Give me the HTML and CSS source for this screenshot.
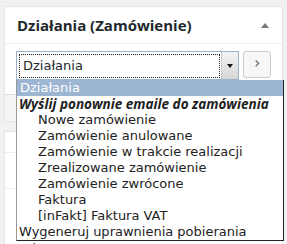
FILE: index.html
```html
<!DOCTYPE html>
<html lang="pl">
<head>
  <meta charset="UTF-8" />
  <title>Działania (Zamówienie)</title>
  <link rel="stylesheet" href="styles.css">
</head>
<body>

<div class="postbox">
  <div class="hndle">
    <h2>Działania (Zamówienie)</h2>
    <span class="toggle"></span>
  </div>
  <div class="inside">
    <div class="select">
      <div class="select-value">Działania</div>
      <div class="select-arrow"><span></span></div>
    </div>
    <button class="go">&#8250;</button>
  </div>
  <div class="publishing"></div>
</div>

<div class="postbox second">
  <div class="hndle small"></div>
  <div class="row"></div>
  <div class="row last">Faktura VAT: <a href="#">12/01/2017</a></div>
</div>

<ul class="dropdown">
  <li class="opt selected">Działania</li>
  <li class="group">Wyślij ponownie emaile do zamówienia</li>
  <li class="opt sub">Nowe zamówienie</li>
  <li class="opt sub">Zamówienie anulowane</li>
  <li class="opt sub">Zamówienie w trakcie realizacji</li>
  <li class="opt sub">Zrealizowane zamówienie</li>
  <li class="opt sub">Zamówienie zwrócone</li>
  <li class="opt sub">Faktura</li>
  <li class="opt sub">[inFakt] Faktura VAT</li>
  <li class="opt">Wygeneruj uprawnienia pobierania</li>
</ul>

</body>
</html>
```

FILE: styles.css
```css
body {
  margin: 0;
  background: #f1f1f1;
  font-family: "DejaVu Sans", sans-serif;
  color: #23282d;
  position: relative;
  height: 244px;
  overflow: hidden;
}
.postbox {
  margin: 6px 4px 0 4px;
  background: #fff;
  border: 1px solid #e5e5e5;
}
.hndle {
  height: 36px;
  border-bottom: 1px solid #eee;
  display: flex;
  align-items: center;
  justify-content: space-between;
  padding: 0 13px 0 12px;
}
.hndle h2 {
  margin: 0;
  font-family: "Open Sans", sans-serif;
  font-size: 15px;
  font-weight: bold;
  color: #23282d;
}
.toggle {
  width: 0;
  height: 0;
  border-left: 4px solid transparent;
  border-right: 4px solid transparent;
  border-bottom: 5px solid #72777c;
}
.inside {
  display: flex;
  align-items: flex-start;
  gap: 4px;
  padding: 7px 11px 14px 11px;
}
.select {
  width: 225px;
  height: 27px;
  border: 1px solid #9fb3c8;
  display: flex;
  background: #fff;
}
.select-value {
  flex: 1;
  margin: 2px 1px 1px 2px;
  border: 1px dotted #222;
  font-size: 13px;
  line-height: 21px;
  padding-left: 3px;
}
.select-arrow {
  width: 16px;
  background: linear-gradient(#f4f4f4, #d6d6d6);
  border-left: 1px solid #c8c8c8;
  display: flex;
  align-items: center;
  justify-content: center;
}
.select-arrow span {
  width: 0;
  height: 0;
  border-left: 3px solid transparent;
  border-right: 3px solid transparent;
  border-top: 4px solid #111;
}
.go {
  width: 28px;
  height: 27px;
  border: 1px solid #ccc;
  border-radius: 3px;
  background: #f7f7f7;
  color: #555;
  font-size: 15px;
  padding: 0 0 3px 0;
  font-family: "DejaVu Sans", sans-serif;
}
.publishing {
  height: 26px;
  background: #f5f5f5;
  border-top: 1px solid #ddd;
}
.second {
  margin-top: 9px;
}
.hndle.small {
  height: 20px;
}
.row {
  height: 35px;
  border-bottom: 1px solid #eee;
}
.row.last {
  height: auto;
  border: none;
  padding: 52px 0 0 13px;
  font-size: 13px;
  line-height: 16px;
}
.row a {
  color: #0073aa;
}
.dropdown {
  position: absolute;
  left: 16px;
  top: 80px;
  width: 266px;
  margin: 0;
  padding: 0;
  list-style: none;
  background: #fff;
  border-left: 1px solid #999;
  border-right: 1px solid #222;
  border-bottom: 1px solid #222;
  font-size: 13px;
  line-height: 16px;
  color: #222;
}
.dropdown li {
  height: 16px;
  padding-left: 2px;
  white-space: nowrap;
}
.dropdown .selected {
  background: #9cb5d2;
  color: #fff;
  padding-left: 3px;
}
.dropdown .group {
  font-weight: bold;
  font-style: italic;
  font-family: "Open Sans", sans-serif;
  font-size: 13.5px;
}
.dropdown .sub {
  padding-left: 21px;
}
```
